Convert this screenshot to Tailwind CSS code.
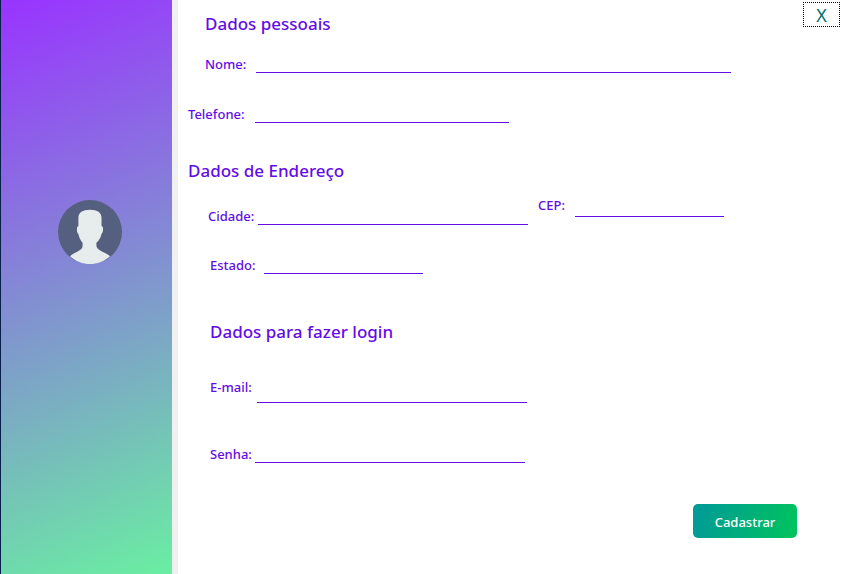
<!DOCTYPE html>
<html lang="pt-BR">
<head>
<meta charset="utf-8">
<meta name="viewport" content="width=device-width, initial-scale=1">
<title>Cadastro</title>
<script src="https://cdn.jsdelivr.net/npm/@tailwindcss/browser@4"></script>
</head>
<body class="flex min-h-screen bg-white font-['Noto_Sans','Open_Sans',sans-serif] text-[13px] leading-[18px] font-medium text-[#640ce6]">
  <aside class="flex w-[178px] shrink-0 items-start justify-center border-r-6 border-l border-r-[#f0f0f0] border-l-[#06204a] bg-[linear-gradient(158deg,#9933ff,#6aeea2)] pt-[200px] pl-[7px]">
    <svg class="size-16" viewBox="0 0 64 64" role="img" aria-label="Usuário">
      <circle cx="32" cy="32" r="32" fill="#556080"/>
      <path fill="#e7eced" d="M12 56.200C15 53.500 19 52 22 50C24 48.700 24.600 47.500 24.600 45.500V42.800C22.500 40.500 21 37.500 20.400 34C19 33 18.800 31 19 28C19 26.800 20 26.300 20.400 26V18C20.400 12.500 24.500 9.800 32 9.800S43.500 12.500 43.500 18V26C44.200 26.300 45 26.800 45 28C45.200 31 44.800 33 43.500 34C42.900 37.500 41 40.500 38.400 42.800V45.500C38.400 47.500 39.500 48.700 41.500 50C44.500 52 49 53.500 52 56.200C46.500 61.300 39.500 64 32 64S17.500 61.300 12 56.200Z"/>
    </svg>
  </aside>
  <main class="relative min-w-0 flex-1">
    <button type="button" aria-label="Fechar" class="absolute top-[2px] right-px h-[25px] w-[37px] border border-dotted border-black text-center text-[18px] leading-[22px] font-normal text-[#007070]">X</button>
    <form class="flex flex-col pt-3 pr-11 pl-[10px]">
      <section>
        <h2 class="pl-[17px] text-[17px] leading-6">Dados pessoais</h2>
        <div class="mt-[19px] flex pl-[17px]">
          <label for="nome" class="w-[51px] shrink-0">Nome:</label>
          <input id="nome" type="text" class="h-[18px] w-full max-w-[475px] border-b border-b-[#640ce6] outline-none">
        </div>
        <div class="mt-8 flex">
          <label for="telefone" class="w-[67px] shrink-0">Telefone:</label>
          <input id="telefone" type="tel" class="h-[18px] w-full max-w-[254px] border-b border-b-[#640ce6] outline-none">
        </div>
      </section>
      <section class="mt-9">
        <h2 class="text-[17px] leading-6">Dados de Endereço</h2>
        <div class="mt-[13px] flex items-start gap-[10px] pl-5">
          <div class="mt-[11px] flex w-full max-w-[320px]">
            <label for="cidade" class="w-[50px] shrink-0">Cidade:</label>
            <input id="cidade" type="text" class="h-[18px] w-full border-b border-b-[#640ce6] outline-none">
          </div>
          <div class="flex w-full max-w-[186px]">
            <label for="cep" class="w-[37px] shrink-0">CEP:</label>
            <input id="cep" type="text" class="h-[21px] w-full border-b border-b-[#640ce6] outline-none">
          </div>
        </div>
        <div class="mt-[31px] flex pl-[22px]">
          <label for="estado" class="w-[54px] shrink-0">Estado:</label>
          <input id="estado" type="text" class="h-[18px] w-full max-w-[159px] border-b border-b-[#640ce6] outline-none">
        </div>
      </section>
      <section class="mt-[46px] pl-[22px]">
        <h2 class="text-[17px] leading-6">Dados para fazer login</h2>
        <div class="mt-[34px] flex">
          <label for="email" class="w-[47px] shrink-0">E-mail:</label>
          <input id="email" type="email" class="h-[25px] w-full max-w-[270px] border-b border-b-[#640ce6] outline-none">
        </div>
        <div class="mt-[42px] flex">
          <label for="senha" class="w-[45px] shrink-0">Senha:</label>
          <input id="senha" type="password" class="h-[18px] w-full max-w-[270px] border-b border-b-[#640ce6] outline-none">
        </div>
      </section>
      <button type="submit" class="mt-[41px] h-[34px] w-[104px] self-end rounded-[5px] bg-[linear-gradient(108deg,#009999,#00c45c)] pt-[2px] text-white">Cadastrar</button>
    </form>
  </main>
</body>
</html>
